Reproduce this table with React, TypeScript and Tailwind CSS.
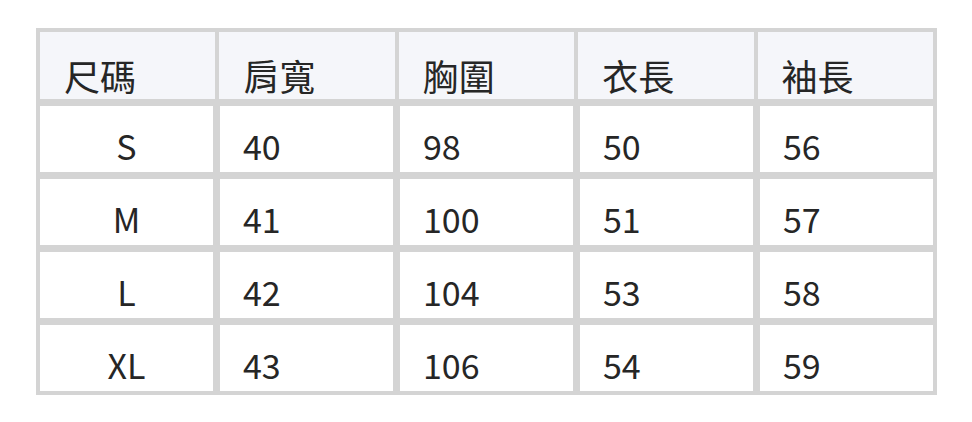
const headers = ['尺碼', '肩寬', '胸圍', '衣長', '袖長'];

const rows = [
  ['S', '40', '98', '50', '56'],
  ['M', '41', '100', '51', '57'],
  ['L', '42', '104', '53', '58'],
  ['XL', '43', '106', '54', '59'],
];

export default function App() {
  return (
    <div className="w-[972px] h-[422px] bg-white pt-[28px] pl-[36px] font-['Noto_Sans_CJK_TC','Noto_Sans',sans-serif] text-[#262626]">
      <div className="w-[901px] bg-[#d4d4d4] p-[4px] flex flex-col gap-[7px]">
        {/* Header */}
        <div className="grid grid-cols-5 gap-x-[4px]">
          {headers.map((h) => (
            <div key={h} className="h-[67px] bg-[#f5f6fa] flex items-end pl-[24px] pb-[1px] text-[36px] leading-[46px]">
              {h}
            </div>
          ))}
        </div>

        {rows.map((r) => (
          <div key={r[0]} className="grid grid-cols-5 gap-x-[7px]">
            {r.map((v, i) => (
              <div
                key={i}
                className={`h-[66px] bg-white flex items-end pb-[1px] text-[34px] ${i === 0 ? 'justify-center' : 'pl-[23px]'}`}
              >
                {v}
              </div>
            ))}
          </div>
        ))}
      </div>
    </div>
  );
}
